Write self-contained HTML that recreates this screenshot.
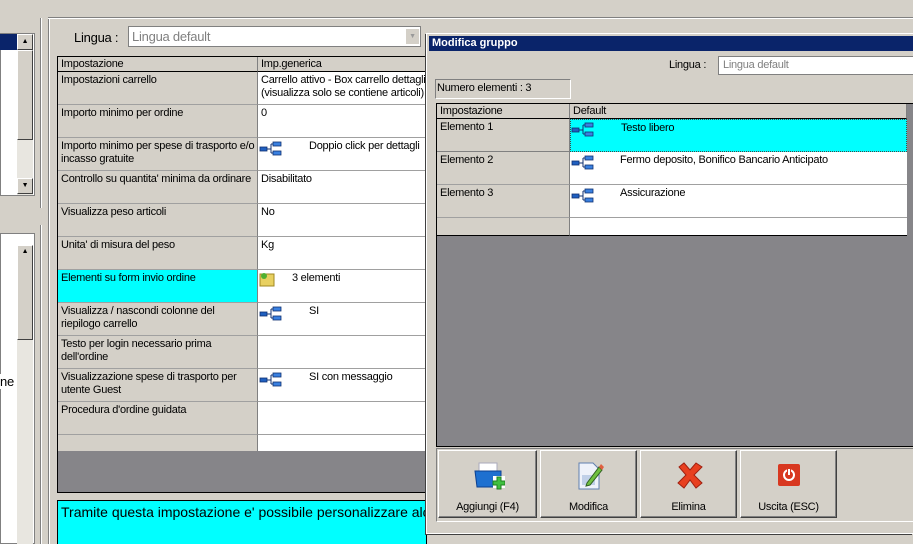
<!DOCTYPE html>
<html><head><style>
*{margin:0;padding:0;box-sizing:border-box}
body{width:913px;height:544px;background:#d4d0c8;position:relative;overflow:hidden;font-family:"Liberation Sans",Arial,sans-serif;font-size:11px;color:#000;letter-spacing:-0.25px}
.a{position:absolute}
.cell{position:absolute;padding:2px 3px;line-height:13px;border-bottom:1px solid #a0a0a0;white-space:nowrap;overflow:hidden}
.g{background:#d4d0c8;border-right:1px solid #808080}
.w{background:#fff}
.ic{position:absolute;width:24px;height:16px}
.btn{position:absolute;top:450px;height:68px;background:#d4d0c8;border:1px solid #fff;border-right-color:#404040;border-bottom-color:#404040;box-shadow:inset -1px -1px #808080;text-align:center;font-size:11px}
.btn span{position:absolute;bottom:4px;left:0;right:0}
</style></head><body>
<!-- left side -->
<div class="a" style="left:0;top:33px;width:35px;height:163px;background:#fff;border:1px solid #808080"></div>
<div class="a" style="left:0;top:34px;width:17px;height:16px;background:#0a246a"></div>
<div class="a" style="left:17px;top:34px;width:16px;height:161px;background:#e8e6e0"></div>
<div class="a" style="left:17px;top:34px;width:16px;height:16px;background:#d4d0c8;border:1px solid #fff;border-right-color:#404040;border-bottom-color:#404040;font-size:7px;text-align:center;line-height:14px">▲</div>
<div class="a" style="left:17px;top:50px;width:16px;height:90px;background:#d4d0c8;border:1px solid #fff;border-right-color:#404040;border-bottom-color:#404040"></div>
<div class="a" style="left:17px;top:178px;width:16px;height:16px;background:#d4d0c8;border:1px solid #fff;border-right-color:#404040;border-bottom-color:#404040;font-size:7px;text-align:center;line-height:14px">▼</div>
<div class="a" style="left:40px;top:18px;width:2px;height:190px;border-left:1px solid #808080;border-right:1px solid #fff"></div>
<div class="a" style="left:0;top:233px;width:35px;height:311px;background:#fff;border:1px solid #808080"></div>
<div class="a" style="left:17px;top:245px;width:16px;height:95px;background:#d4d0c8;border:1px solid #fff;border-right-color:#404040;border-bottom-color:#404040"></div>
<div class="a" style="left:17px;top:245px;width:16px;height:16px;font-size:7px;text-align:center;line-height:14px">▲</div>
<div class="a" style="left:17px;top:340px;width:16px;height:204px;background:#e8e6e0"></div>
<div class="a" style="left:0;top:374px;width:17px;font-size:13px;background:#fff">ne</div>
<div class="a" style="left:40px;top:225px;width:2px;height:319px;border-left:1px solid #808080;border-right:1px solid #fff"></div>
<div class="a" style="left:48px;top:18px;width:2px;height:526px;border-left:1px solid #808080;border-right:1px solid #fff"></div>
<div class="a" style="left:48px;top:17px;width:865px;height:2px;border-top:1px solid #808080;border-bottom:1px solid #fff"></div>

<!-- main -->
<div class="a" style="left:74px;top:30px;font-size:13px;color:#000">Lingua :</div>
<div class="a" style="left:128px;top:26px;width:293px;height:21px;background:#fff;border:1px solid #808080;color:#808080;font-size:13px;padding:2px 3px">Lingua default</div>
<div class="a" style="left:405px;top:28px;width:15px;height:17px;background:#d4d0c8;border:1px solid #fff;color:#999;font-size:7px;text-align:center;line-height:15px">▼</div>
<div class="a" style="left:57px;top:56px;width:370px;height:396px;background:#fff;border:1px solid #000"></div>
<div class="cell g" style="left:58px;top:57px;width:200px;height:15px;padding-top:1px;border-bottom:1px solid #000">Impostazione</div>
<div class="cell g" style="left:258px;top:57px;width:169px;height:15px;padding-top:1px;border-bottom:1px solid #000">Imp.generica</div>

<div class="cell g" style="left:58px;top:72px;width:200px;height:33px">Impostazioni carrello</div>
<div class="cell w" style="left:258px;top:72px;width:169px;height:33px">Carrello attivo - Box carrello dettagli<br>(visualizza solo se contiene articoli)</div>
<div class="cell g" style="left:58px;top:105px;width:200px;height:33px">Importo minimo per ordine</div>
<div class="cell w" style="left:258px;top:105px;width:169px;height:33px">0</div>
<div class="cell g" style="left:58px;top:138px;width:200px;height:33px">Importo minimo per spese di trasporto e/o<br>incasso gratuite</div>
<div class="cell w" style="left:258px;top:138px;width:169px;height:33px;padding-left:51px">Doppio click per dettagli</div>
<div class="cell g" style="left:58px;top:171px;width:200px;height:33px">Controllo su quantita' minima da ordinare</div>
<div class="cell w" style="left:258px;top:171px;width:169px;height:33px">Disabilitato</div>
<div class="cell g" style="left:58px;top:204px;width:200px;height:33px">Visualizza peso articoli</div>
<div class="cell w" style="left:258px;top:204px;width:169px;height:33px">No</div>
<div class="cell g" style="left:58px;top:237px;width:200px;height:33px">Unita' di misura del peso</div>
<div class="cell w" style="left:258px;top:237px;width:169px;height:33px">Kg</div>
<div class="cell g" style="left:58px;top:270px;width:200px;height:33px;background:#00ffff">Elementi su form invio ordine</div>
<div class="cell w" style="left:258px;top:270px;width:169px;height:33px;padding-left:34px">3 elementi</div>
<div class="cell g" style="left:58px;top:303px;width:200px;height:33px">Visualizza / nascondi colonne del<br>riepilogo carrello</div>
<div class="cell w" style="left:258px;top:303px;width:169px;height:33px;padding-left:51px">SI</div>
<div class="cell g" style="left:58px;top:336px;width:200px;height:33px">Testo per login necessario prima<br>dell'ordine</div>
<div class="cell w" style="left:258px;top:336px;width:169px;height:33px"></div>
<div class="cell g" style="left:58px;top:369px;width:200px;height:33px">Visualizzazione spese di trasporto per<br>utente Guest</div>
<div class="cell w" style="left:258px;top:369px;width:169px;height:33px;padding-left:51px">SI con messaggio</div>
<div class="cell g" style="left:58px;top:402px;width:200px;height:33px">Procedura d'ordine guidata</div>
<div class="cell w" style="left:258px;top:402px;width:169px;height:33px"></div>
<div class="cell g" style="left:58px;top:435px;width:200px;height:16px;border-bottom:0"></div>
<div class="a" style="left:57px;top:451px;width:370px;height:42px;background:#868589;border:1px solid #000;border-top:0"></div>
<div class="a" style="left:57px;top:500px;width:370px;height:44px;background:#00ffff;border:1px solid #000;border-bottom:0;font-size:14px;padding:3px 3px;white-space:nowrap;overflow:hidden;letter-spacing:0">Tramite questa impostazione e' possibile personalizzare alcu</div>

<svg class="ic" style="left:259px;top:141px" viewBox="0 0 24 16"><rect x="1" y="6" width="7" height="4" fill="#2060c0" stroke="#103070" stroke-width=".8"/><path d="M8 8 L12 8 M12 3 L12 12 M12 3 L15 3 M12 12 L15 12" stroke="#103070" fill="none"/><rect x="14" y="1" width="8" height="4" fill="#3a80e0" stroke="#103070" stroke-width=".8"/><rect x="14" y="10" width="8" height="4" fill="#3a80e0" stroke="#103070" stroke-width=".8"/></svg>
<svg class="ic" style="left:259px;top:306px" viewBox="0 0 24 16"><rect x="1" y="6" width="7" height="4" fill="#2060c0" stroke="#103070" stroke-width=".8"/><path d="M8 8 L12 8 M12 3 L12 12 M12 3 L15 3 M12 12 L15 12" stroke="#103070" fill="none"/><rect x="14" y="1" width="8" height="4" fill="#3a80e0" stroke="#103070" stroke-width=".8"/><rect x="14" y="10" width="8" height="4" fill="#3a80e0" stroke="#103070" stroke-width=".8"/></svg>
<svg class="ic" style="left:259px;top:372px" viewBox="0 0 24 16"><rect x="1" y="6" width="7" height="4" fill="#2060c0" stroke="#103070" stroke-width=".8"/><path d="M8 8 L12 8 M12 3 L12 12 M12 3 L15 3 M12 12 L15 12" stroke="#103070" fill="none"/><rect x="14" y="1" width="8" height="4" fill="#3a80e0" stroke="#103070" stroke-width=".8"/><rect x="14" y="10" width="8" height="4" fill="#3a80e0" stroke="#103070" stroke-width=".8"/></svg>
<svg class="a" style="left:259px;top:271px" width="16" height="16" viewBox="0 0 16 16"><rect x="1" y="3" width="14" height="12" fill="#e8d060" stroke="#a08820"/><circle cx="5" cy="5" r="3" fill="#50b030"/></svg>

<!-- dialog -->
<div class="a" style="left:426px;top:33px;width:487px;height:501px;background:#d4d0c8;border:1px solid #fff;border-right:0;box-shadow:-1px 1px #404040"></div>
<div class="a" style="left:429px;top:36px;width:484px;height:15px;background:#0a246a;color:#fff;font-weight:bold;font-size:11px;padding:1px 3px;letter-spacing:0">Modifica gruppo</div>
<div class="a" style="left:669px;top:59px;font-size:11px">Lingua :</div>
<div class="a" style="left:718px;top:56px;width:195px;height:19px;background:#fff;border:1px solid #808080;border-right:0;color:#808080;padding:2px 4px">Lingua default</div>
<div class="a" style="left:435px;top:79px;width:136px;height:20px;border:1px solid #808080;border-right-color:#fff;border-bottom-color:#fff;padding:2px 1px">Numero elementi : 3</div>
<div class="a" style="left:436px;top:103px;width:477px;height:344px;background:#868589;border:1px solid #000;border-right:0"></div>
<div class="a" style="left:437px;top:104px;width:470px;height:132px;background:#fff"></div>
<div class="cell g" style="left:437px;top:104px;width:133px;height:15px;padding-top:1px;border-bottom:1px solid #000">Impostazione</div>
<div class="cell g" style="left:570px;top:104px;width:337px;height:15px;padding-top:1px;border-bottom:1px solid #000">Default</div>
<div class="cell g" style="left:437px;top:119px;width:133px;height:33px;border-bottom-color:#808080">Elemento 1</div>
<div class="cell w" style="left:570px;top:119px;width:337px;height:33px;background:#00ffff;border:1px dotted #444;padding-left:50px">Testo libero</div>
<div class="cell g" style="left:437px;top:152px;width:133px;height:33px">Elemento 2</div>
<div class="cell w" style="left:570px;top:152px;width:337px;height:33px;padding-left:50px">Fermo deposito, Bonifico Bancario Anticipato</div>
<div class="cell g" style="left:437px;top:185px;width:133px;height:33px">Elemento 3</div>
<div class="cell w" style="left:570px;top:185px;width:337px;height:33px;padding-left:50px">Assicurazione</div>
<div class="cell g" style="left:437px;top:218px;width:133px;height:18px;border-bottom:1px solid #000"></div>
<div class="a" style="left:570px;top:235px;width:337px;height:1px;background:#000"></div>
<div class="a" style="left:907px;top:104px;width:6px;height:132px;background:#868589"></div>
<svg class="ic" style="left:571px;top:122px" viewBox="0 0 24 16"><rect x="1" y="6" width="7" height="4" fill="#2060c0" stroke="#103070" stroke-width=".8"/><path d="M8 8 L12 8 M12 3 L12 12 M12 3 L15 3 M12 12 L15 12" stroke="#103070" fill="none"/><rect x="14" y="1" width="8" height="4" fill="#3a80e0" stroke="#103070" stroke-width=".8"/><rect x="14" y="10" width="8" height="4" fill="#3a80e0" stroke="#103070" stroke-width=".8"/></svg>
<svg class="ic" style="left:571px;top:155px" viewBox="0 0 24 16"><rect x="1" y="6" width="7" height="4" fill="#2060c0" stroke="#103070" stroke-width=".8"/><path d="M8 8 L12 8 M12 3 L12 12 M12 3 L15 3 M12 12 L15 12" stroke="#103070" fill="none"/><rect x="14" y="1" width="8" height="4" fill="#3a80e0" stroke="#103070" stroke-width=".8"/><rect x="14" y="10" width="8" height="4" fill="#3a80e0" stroke="#103070" stroke-width=".8"/></svg>
<svg class="ic" style="left:571px;top:188px" viewBox="0 0 24 16"><rect x="1" y="6" width="7" height="4" fill="#2060c0" stroke="#103070" stroke-width=".8"/><path d="M8 8 L12 8 M12 3 L12 12 M12 3 L15 3 M12 12 L15 12" stroke="#103070" fill="none"/><rect x="14" y="1" width="8" height="4" fill="#3a80e0" stroke="#103070" stroke-width=".8"/><rect x="14" y="10" width="8" height="4" fill="#3a80e0" stroke="#103070" stroke-width=".8"/></svg>

<div class="a" style="left:436px;top:448px;width:477px;height:74px;border:1px solid #808080;border-right:0;border-bottom-color:#fff"></div>
<div class="btn" style="left:438px;width:99px"><svg class="a" style="left:34px;top:10px" width="32" height="30" viewBox="0 0 32 30"><rect x="6" y="2" width="18" height="10" fill="#fff" stroke="#aab"/><path d="M2 10 L28 10 L28 26 L4 26 Z" fill="#1e70d0" stroke="#0c4090"/><rect x="20" y="15" width="12" height="12" fill="#fff"/><path d="M24 16h4v4h4v4h-4v4h-4v-4h-4v-4h4z" fill="#40c040" stroke="#208020"/></svg><span>Aggiungi (F4)</span></div>
<div class="btn" style="left:540px;width:97px"><svg class="a" style="left:36px;top:10px" width="28" height="30" viewBox="0 0 28 30"><path d="M2 2h14l6 6v20H2z" fill="#eef2fa" stroke="#6080b0"/><rect x="5" y="14" width="13" height="10" fill="#c0d0e8"/><path d="M10 22 L22 6 L25 9 L13 24 L9 25 Z" fill="#70c040" stroke="#306020"/><path d="M22 6 L24 3 L27 6 L25 9 Z" fill="#e06040"/></svg><span>Modifica</span></div>
<div class="btn" style="left:640px;width:97px"><svg class="a" style="left:35px;top:10px" width="28" height="28" viewBox="0 0 28 28"><path d="M3 6 L8 2 L14 9 L20 2 L26 6 L18 14 L26 22 L20 27 L14 19 L8 27 L2 22 L10 14 Z" fill="#e84020" stroke="#a02010"/></svg><span>Elimina</span></div>
<div class="btn" style="left:740px;width:97px"><svg class="a" style="left:37px;top:13px" width="22" height="22" viewBox="0 0 22 22"><rect x="0" y="0" width="22" height="22" rx="2" fill="#d83820"/><circle cx="11" cy="11" r="5" fill="none" stroke="#fff" stroke-width="2"/><path d="M11 4v7" stroke="#d83820" stroke-width="4"/><path d="M11 5v6" stroke="#fff" stroke-width="2"/></svg><span>Uscita (ESC)</span></div>
</body></html>
